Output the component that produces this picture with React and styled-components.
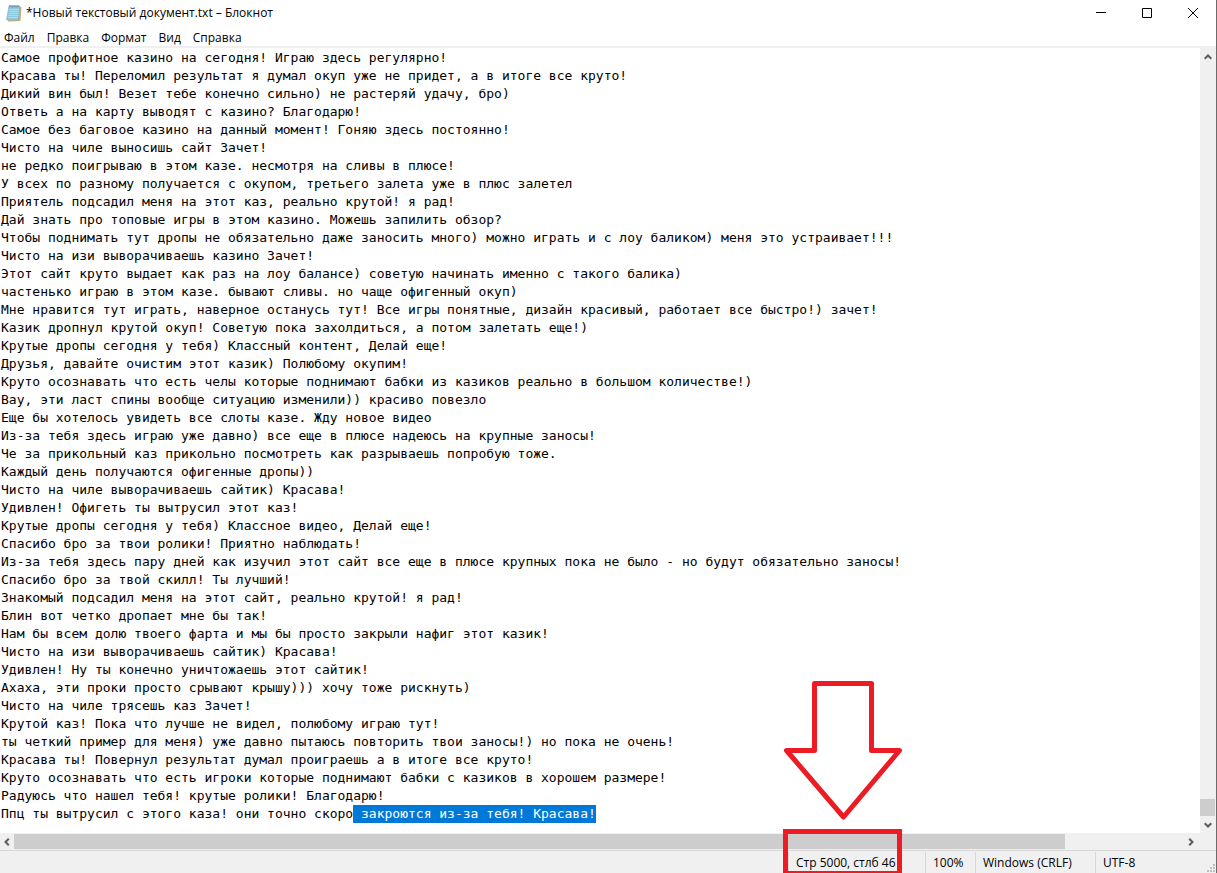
import React, { useEffect, useRef } from 'react';
import styled, { createGlobalStyle } from 'styled-components';

const lines = [
  'Самое профитное казино на сегодня! Играю здесь регулярно!',
  'Красава ты! Переломил результат я думал окуп уже не придет, а в итоге все круто!',
  'Дикий вин был! Везет тебе конечно сильно) не растеряй удачу, бро)',
  'Ответь а на карту выводят с казино? Благодарю!',
  'Самое без баговое казино на данный момент! Гоняю здесь постоянно!',
  'Чисто на чиле выносишь сайт Зачет!',
  'не редко поигрываю в этом казе. несмотря на сливы в плюсе!',
  'У всех по разному получается с окупом, третьего залета уже в плюс залетел',
  'Приятель подсадил меня на этот каз, реально крутой! я рад!',
  'Дай знать про топовые игры в этом казино. Можешь запилить обзор?',
  'Чтобы поднимать тут дропы не обязательно даже заносить много) можно играть и с лоу баликом) меня это устраивает!!!',
  'Чисто на изи выворачиваешь казино Зачет!',
  'Этот сайт круто выдает как раз на лоу балансе) советую начинать именно с такого балика)',
  'частенько играю в этом казе. бывают сливы. но чаще офигенный окуп)',
  'Мне нравится тут играть, наверное останусь тут! Все игры понятные, дизайн красивый, работает все быстро!) зачет!',
  'Казик дропнул крутой окуп! Советую пока захолдиться, а потом залетать еще!)',
  'Крутые дропы сегодня у тебя) Классный контент, Делай еще!',
  'Друзья, давайте очистим этот казик) Полюбому окупим!',
  'Круто осознавать что есть челы которые поднимают бабки из казиков реально в большом количестве!)',
  'Вау, эти ласт спины вообще ситуацию изменили)) красиво повезло',
  'Еще бы хотелось увидеть все слоты казе. Жду новое видео',
  'Из-за тебя здесь играю уже давно) все еще в плюсе надеюсь на крупные заносы!',
  'Че за прикольный каз прикольно посмотреть как разрываешь попробую тоже.',
  'Каждый день получаются офигенные дропы))',
  'Чисто на чиле выворачиваешь сайтик) Красава!',
  'Удивлен! Офигеть ты вытрусил этот каз!',
  'Крутые дропы сегодня у тебя) Классное видео, Делай еще!',
  'Спасибо бро за твои ролики! Приятно наблюдать!',
  'Из-за тебя здесь пару дней как изучил этот сайт все еще в плюсе крупных пока не было - но будут обязательно заносы!',
  'Спасибо бро за твой скилл! Ты лучший!',
  'Знакомый подсадил меня на этот сайт, реально крутой! я рад!',
  'Блин вот четко дропает мне бы так!',
  'Нам бы всем долю твоего фарта и мы бы просто закрыли нафиг этот казик!',
  'Чисто на изи выворачиваешь сайтик) Красава!',
  'Удивлен! Ну ты конечно уничтожаешь этот сайтик!',
  'Ахаха, эти проки просто срывают крышу))) хочу тоже рискнуть)',
  'Чисто на чиле трясешь каз Зачет!',
  'Крутой каз! Пока что лучше не видел, полюбому играю тут!',
  'ты четкий пример для меня) уже давно пытаюсь повторить твои заносы!) но пока не очень!',
  'Красава ты! Повернул результат думал проиграешь а в итоге все круто!',
  'Круто осознавать что есть игроки которые поднимают бабки с казиков в хорошем размере!',
  'Радуюсь что нашел тебя! крутые ролики! Благодарю!',
  'Ппц ты вытрусил с этого каза! они точно скоро закроются из-за тебя! Красава!',
];
const text = lines.join('\n');
const selected = ' закроются из-за тебя! Красава!';

const menu = ['Файл', 'Правка', 'Формат', 'Вид', 'Справка'];

  //STYLED COMPONENTS
const GlobalStyle = createGlobalStyle`
  * {
    box-sizing: border-box;
  }
  body {
    margin: 0;
    background: #fff;
  }
`;

const Window = styled.div`
  display: flex;
  flex-direction: column;
  height: 100vh;
  overflow: hidden;
  border-right: 1px solid #6b6b6b;
  background: #fff;
  color: #000;
  font-family: 'Open Sans', 'Noto Sans', sans-serif;
  font-size: 12px;
`;

const TitleBar = styled.header`
  display: flex;
  align-items: center;
  height: 26px;
  padding-left: 6px;
`;

const Title = styled.h1`
  flex: 1;
  margin: 0;
  padding-left: 4px;
  font-size: 12px;
  font-weight: 400;
  line-height: 16px;
  white-space: nowrap;
`;

const IconButton = styled.button`
  display: flex;
  align-items: center;
  justify-content: center;
  flex: none;
  width: ${({ $w }) => $w}px;
  height: ${({ $h }) => $h}px;
  padding: 0;
  border: 0;
  background: transparent;
`;

const MenuBar = styled.nav`
  display: flex;
  gap: 12px;
  height: 22px;
  padding: 4px 4px 0;
  border-bottom: 2px solid #f0f0f0;
`;

const MenuItem = styled.button`
  padding: 0;
  border: 0;
  background: transparent;
  color: #000;
  font: inherit;
  line-height: 16px;
`;

const Body = styled.main`
  display: flex;
  flex: 1;
  min-height: 0;
`;

const Editor = styled.textarea`
  flex: 1;
  min-width: 0;
  padding: 1px 0 0 1px;
  border: 0;
  outline: 0;
  resize: none;
  overflow: hidden;
  white-space: pre;
  background: #fff;
  color: #000;
  font-family: 'DejaVu Sans Mono', 'Liberation Mono', monospace;
  font-size: 13px;
  line-height: 18px;

  &::selection {
    background: #0078d7;
    color: #fff;
  }
`;

const ScrollBar = styled.div`
  display: flex;
  flex: none;
  background: #f0f0f0;
`;

const VerticalBar = styled(ScrollBar)`
  flex-direction: column;
  justify-content: flex-end;
  width: 16px;
  padding-right: 1px;
`;

const HorizontalBar = styled(ScrollBar)`
  height: 17px;
  padding: 1px 16px 1px 0;
`;

const Track = styled.div`
  display: flex;
  flex: 1;
  align-items: flex-end;
`;

const Thumb = styled.div`
  width: ${({ $w }) => $w};
  height: ${({ $h }) => $h};
  background: #cdcdcd;
`;

const StatusBar = styled.footer`
  display: grid;
  grid-template-columns: 1fr 137px 50px 120px 121px;
  height: 23px;
  border-top: 1px solid #d7d7d7;
  background: #f0f0f0;
`;

const StatusCell = styled.div`
  position: relative;
  margin-top: 1px;
  padding-left: 7px;
  border-left: ${({ $first }) => ($first ? '0' : '1px solid #d7d7d7')};
  line-height: 21px;
  white-space: nowrap;
`;

const Marker = styled.svg`
  position: absolute;
  right: 22px;
  bottom: 0;
  pointer-events: none;
`;

const Grip = styled.svg`
  position: absolute;
  right: 1px;
  bottom: 1px;
`;
  //END of styled components

const NotepadIcon = () => (
  <svg width="16" height="18" viewBox="0 0 16 18">
    <path d="M4 3 H15.5 L14.5 17 L2 17.5 Z" fill="#c9ad78" />
    <path d="M3 2 H14 L12.4 16 H0.5 Z" fill="#8ccbe0" stroke="#7fa9b8" strokeWidth="0.6" />
    <path d="M3.4 5.5 H13 M3.1 7.5 H12.8 M2.8 9.5 H12.6 M2.5 11.5 H12.4 M2.2 13.5 H12.2" stroke="#b4e0ee" strokeWidth="0.8" />
    <path d="M4 1 V3.5 M6 1 V3.5 M8 1 V3.5 M10 1 V3.5 M12 1 V3.5" stroke="#6f7f86" strokeWidth="0.9" />
  </svg>
);

const Chevron = ({ turn }) => (
  <svg width="8" height="8" viewBox="0 0 8 8">
    <path d="M0.7 5.8 L4 2.5 L7.3 5.8" transform={`rotate(${turn} 4 4)`} fill="none" stroke="#5c5c5c" strokeWidth="2" />
  </svg>
);

const App = () => {
  const editor = useRef(null);

  useEffect(() => {
    editor.current.focus({ preventScroll: true });
    editor.current.setSelectionRange(text.length - selected.length, text.length);
  }, []);

  return (
    <Window>
      <GlobalStyle />
      <TitleBar>
        <NotepadIcon />
        <Title>*Новый текстовый документ.txt – Блокнот</Title>
        <IconButton $w={46} $h={26} aria-label="Свернуть">
          <svg width="10" height="10" viewBox="0 0 10 10"><path d="M0 4.5 H10" stroke="#000" /></svg>
        </IconButton>
        <IconButton $w={46} $h={26} aria-label="Развернуть">
          <svg width="10" height="10" viewBox="0 0 10 10"><path d="M0.5 0.5 H9.5 V9.5 H0.5 Z" fill="none" stroke="#000" /></svg>
        </IconButton>
        <IconButton $w={46} $h={26} aria-label="Закрыть">
          <svg width="10" height="10" viewBox="0 0 10 10"><path d="M0 0 L10 10 M10 0 L0 10" stroke="#000" /></svg>
        </IconButton>
      </TitleBar>
      <MenuBar>
        {menu.map(item => <MenuItem key={item}>{item}</MenuItem>)}
      </MenuBar>
      <Body>
        <Editor ref={editor} aria-label="Текст" spellCheck={false} defaultValue={text} />
        <VerticalBar>
          <IconButton $w={15} $h={17} aria-label="Вверх"><Chevron turn={0} /></IconButton>
          <Track><Thumb $w="15px" $h="17px" /></Track>
          <IconButton $w={15} $h={17} aria-label="Вниз"><Chevron turn={180} /></IconButton>
        </VerticalBar>
      </Body>
      <HorizontalBar>
        <IconButton $w={14} $h={15} aria-label="Влево"><Chevron turn={270} /></IconButton>
        <Track><Thumb $w="90%" $h="15px" /></Track>
        <IconButton $w={18} $h={15} aria-label="Вправо"><Chevron turn={90} /></IconButton>
      </HorizontalBar>
      <StatusBar>
        <StatusCell $first />
        <StatusCell>
          Стр 5000, стлб 46
          <Marker width="120" height="194" viewBox="783 679 120 194">
            <path
              d="M814.5 683.5 H871.5 V750.5 H899.5 L843.5 817 L786.5 750.5 H814.5 Z"
              fill="none"
              stroke="#ed1c24"
              strokeWidth="5"
              strokeLinejoin="round"
            />
            <path d="M785.5 831.5 H899.5 V873.5 H785.5 Z" fill="none" stroke="#ed1c24" strokeWidth="5" />
          </Marker>
        </StatusCell>
        <StatusCell>100%</StatusCell>
        <StatusCell>Windows (CRLF)</StatusCell>
        <StatusCell>
          UTF-8
          <Grip width="8" height="8" viewBox="0 0 8 8">
            <path d="M6 0h2v2h-2z M3 3h2v2h-2z M6 3h2v2h-2z M0 6h2v2h-2z M3 6h2v2h-2z M6 6h2v2h-2z" fill="#bfbfbf" />
          </Grip>
        </StatusCell>
      </StatusBar>
    </Window>
  );
};

export default App;
